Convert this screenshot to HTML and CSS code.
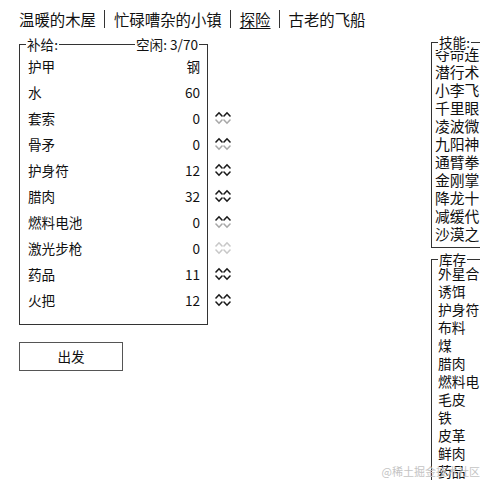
FILE: index.html
```html
<!DOCTYPE html>
<html lang="zh-CN">
<head>
<meta charset="utf-8">
<title>探险</title>
<link rel="stylesheet" href="styles.css">
</head>
<body>
<div class="page">
  <nav class="header">
    <span class="tab">温暖的木屋</span>
    <span class="tab">忙碌嘈杂的小镇</span>
    <span class="tab active">探险</span>
    <span class="tab">古老的飞船</span>
  </nav>
  <div class="content">
    <div class="left">
      <div class="supplies">
        <div class="box">
          <span class="legend legend-left">补给:</span>
          <span class="legend legend-right">空闲: 3/70</span>
          <div class="row"><span>护甲</span><span>钢</span></div>
          <div class="row"><span>水</span><span>60</span></div>
          <div class="row"><span>套索</span><span>0</span></div>
          <div class="row"><span>骨矛</span><span>0</span></div>
          <div class="row"><span>护身符</span><span>12</span></div>
          <div class="row"><span>腊肉</span><span>32</span></div>
          <div class="row"><span>燃料电池</span><span>0</span></div>
          <div class="row"><span>激光步枪</span><span>0</span></div>
          <div class="row"><span>药品</span><span>11</span></div>
          <div class="row"><span>火把</span><span>12</span></div>
        </div>
        <div class="arrows">
          <div class="cell"></div>
          <div class="cell"></div>
          <div class="cell"><svg class="updn" viewBox="0 0 16 14"><polyline class="on" points="1,5 4,1.8 7,5"/><polyline class="on" points="9,5 12,1.8 15,5"/><polyline class="off" points="1,9 4,12.2 7,9"/><polyline class="off" points="9,9 12,12.2 15,9"/></svg></div>
          <div class="cell"><svg class="updn" viewBox="0 0 16 14"><polyline class="on" points="1,5 4,1.8 7,5"/><polyline class="on" points="9,5 12,1.8 15,5"/><polyline class="off" points="1,9 4,12.2 7,9"/><polyline class="off" points="9,9 12,12.2 15,9"/></svg></div>
          <div class="cell"><svg class="updn" viewBox="0 0 16 14"><polyline class="on" points="1,5 4,1.8 7,5"/><polyline class="on" points="9,5 12,1.8 15,5"/><polyline class="on" points="1,9 4,12.2 7,9"/><polyline class="on" points="9,9 12,12.2 15,9"/></svg></div>
          <div class="cell"><svg class="updn" viewBox="0 0 16 14"><polyline class="on" points="1,5 4,1.8 7,5"/><polyline class="on" points="9,5 12,1.8 15,5"/><polyline class="on" points="1,9 4,12.2 7,9"/><polyline class="on" points="9,9 12,12.2 15,9"/></svg></div>
          <div class="cell"><svg class="updn" viewBox="0 0 16 14"><polyline class="on" points="1,5 4,1.8 7,5"/><polyline class="on" points="9,5 12,1.8 15,5"/><polyline class="off" points="1,9 4,12.2 7,9"/><polyline class="off" points="9,9 12,12.2 15,9"/></svg></div>
          <div class="cell"><svg class="updn" viewBox="0 0 16 14"><polyline class="dim" points="1,5 4,1.8 7,5"/><polyline class="dim" points="9,5 12,1.8 15,5"/><polyline class="dim" points="1,9 4,12.2 7,9"/><polyline class="dim" points="9,9 12,12.2 15,9"/></svg></div>
          <div class="cell"><svg class="updn" viewBox="0 0 16 14"><polyline class="on" points="1,5 4,1.8 7,5"/><polyline class="on" points="9,5 12,1.8 15,5"/><polyline class="on" points="1,9 4,12.2 7,9"/><polyline class="on" points="9,9 12,12.2 15,9"/></svg></div>
          <div class="cell"><svg class="updn" viewBox="0 0 16 14"><polyline class="on" points="1,5 4,1.8 7,5"/><polyline class="on" points="9,5 12,1.8 15,5"/><polyline class="on" points="1,9 4,12.2 7,9"/><polyline class="on" points="9,9 12,12.2 15,9"/></svg></div>
        </div>
      </div>
      <button class="embark">出发</button>
    </div>
    <div class="right">
      <div class="panel perks">
        <span class="legend legend-left">技能:</span>
        <div class="item">夺命连</div>
        <div class="item">潜行术</div>
        <div class="item">小李飞</div>
        <div class="item">千里眼</div>
        <div class="item">凌波微</div>
        <div class="item">九阳神</div>
        <div class="item">通臂拳</div>
        <div class="item">金刚掌</div>
        <div class="item">降龙十</div>
        <div class="item">减缓代</div>
        <div class="item">沙漠之</div>
      </div>
      <div class="panel stores">
        <span class="legend legend-left">库存</span>
        <div class="item">外星合</div>
        <div class="item">诱饵</div>
        <div class="item">护身符</div>
        <div class="item">布料</div>
        <div class="item">煤</div>
        <div class="item">腊肉</div>
        <div class="item">燃料电</div>
        <div class="item">毛皮</div>
        <div class="item">铁</div>
        <div class="item">皮革</div>
        <div class="item">鲜肉</div>
        <div class="item">药品</div>
      </div>
    </div>
  </div>
  <div class="watermark">@稀土掘金技术社区</div>
</div>
</body>
</html>
```

FILE: styles.css
```css
html, body {
  margin: 0;
  padding: 0;
}
body {
  width: 480px;
  height: 480px;
  overflow: hidden;
  background: #fff;
  color: #111;
  font-family: "Noto Sans CJK SC", "Noto Sans", sans-serif;
}
.page {
  position: relative;
  width: 480px;
  height: 480px;
  overflow: hidden;
}
.header {
  display: flex;
  margin: 10px 0 0 19px;
  height: 18px;
  font-size: 15.4px;
  line-height: 18px;
  white-space: nowrap;
}
.tab {
  padding: 0 8px 0 9px;
  border-left: 1px solid #333;
}
.tab:first-child {
  padding-left: 0;
  border-left: none;
}
.active {
  text-decoration: underline;
  text-underline-offset: 2px;
}
.content {
  display: flex;
  align-items: flex-start;
  margin: 14px 0 0 19px;
}
.left {
  width: 412px;
  flex: none;
}
.supplies {
  display: flex;
  align-items: flex-start;
  margin-top: 2px;
}
.box {
  position: relative;
  width: 172px;
  border: 1px solid #333;
  padding: 8px 7px 11px 8px;
  font-size: 13.6px;
}
.row {
  display: flex;
  justify-content: space-between;
  height: 26px;
  line-height: 26px;
}
.legend {
  position: absolute;
  top: -10px;
  padding: 0 1px;
  background: #fff;
  font-size: 13.6px;
  line-height: 18px;
  white-space: nowrap;
}
.legend-left {
  left: 6px;
}
.legend-right {
  right: 8px;
}
.arrows {
  margin-left: 7px;
  padding-top: 9px;
}
.cell {
  display: flex;
  align-items: center;
  height: 26px;
}
.updn {
  width: 16px;
  height: 14px;
}
.updn polyline {
  fill: none;
  stroke-width: 1.6;
  stroke-linecap: round;
  stroke-linejoin: miter;
}
.updn .on {
  stroke: #1a1a1a;
}
.updn .off {
  stroke: #a8a8a8;
}
.updn .dim {
  stroke: #c8c8c8;
}
.embark {
  display: block;
  margin-top: 17px;
  width: 104px;
  height: 29px;
  padding: 0;
  border: 1px solid #555;
  background: #fff;
  color: #111;
  font-family: inherit;
  font-size: 13.6px;
  line-height: 27px;
}
.right {
  width: 60px;
  flex: none;
}
.panel {
  position: relative;
  border: 1px solid #333;
  border-right: none;
  line-height: 18px;
  white-space: nowrap;
}
.perks {
  padding: 2px 0 4px 3px;
  font-size: 14.8px;
}
.stores {
  margin-top: 11px;
  padding: 4px 0 4px 6px;
  font-size: 13.8px;
}
.item {
  height: 18px;
}
.watermark {
  position: absolute;
  right: 0;
  bottom: 2px;
  font-size: 11px;
  line-height: 14px;
  color: #c4c4c4;
  white-space: nowrap;
}
```
